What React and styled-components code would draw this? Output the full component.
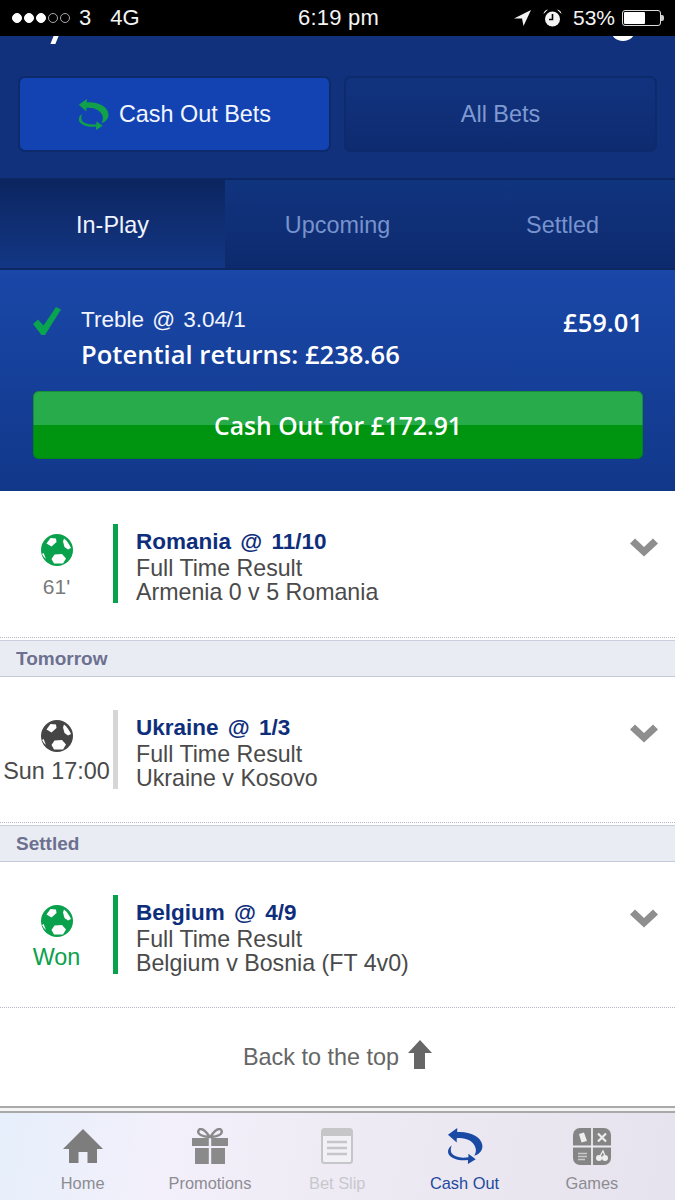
import React from 'react';
import styled, { createGlobalStyle } from 'styled-components';

const Global = createGlobalStyle`
  html, body { margin: 0; padding: 0; background: #fff; }
  body { font-family: "Liberation Sans", Arial, sans-serif; }
  * { box-sizing: border-box; }
`;

const Page = styled.div`width: 675px; height: 1200px; overflow: hidden; display: flex; flex-direction: column; position: relative;`;

const StatusBar = styled.div`
  height: 36px; background: #000; color: #f4f4f4; display: grid; grid-template-columns: 1fr auto 1fr; align-items: center;
  padding: 0 10px 0 12px; font-size: 21px; flex: none; position: relative; z-index: 2;
`;
const StatusLeft = styled.div`display: flex; align-items: center; gap: 5px; font-size: 22px;`;
const Carrier = styled.span`margin-left: 4px;`;
const Network = styled.span`margin-left: 14px;`;
const Dots = styled.div`display: flex; gap: 2px;`;
const Dot = styled.span`width: 10px; height: 10px; border-radius: 50%; border: 1px solid #bbb; background: ${p => p.$on ? '#fff' : 'transparent'}; border-color: ${p => p.$on ? '#fff' : '#aaa'};`;
const Clock = styled.div`font-size: 22px; font-weight: 500; letter-spacing: .2px; padding-left: 2px; padding-right: 2px;`;
const StatusRight = styled.div`display: flex; align-items: center; justify-content: flex-end; gap: 11px; padding-right: 4px;`;
const Percent = styled.span`margin-right: -4px;`;
const Battery = styled.div`width: 39px; height: 16px; border: 1px solid #ddd; border-radius: 3px; padding: 1px; position: relative;`;
const BatteryFill = styled.div`height: 100%; background: #fff; border-radius: 1px; width: 60%;`;
const BatteryNib = styled.span`position: absolute; right: -4px; top: 4px; width: 3px; height: 6px; background: #ccc; border-radius: 0 2px 2px 0;`;

const Header = styled.div`
  height: 144px; flex: none; background: #11317c; padding: 40px 18px 0; position: relative; border-bottom: 2px solid #0c2863;
`;
const ClippedTail = styled.span`position: absolute; left: 52px; top: 0; width: 5px; height: 8px; background: #fff; transform: skewX(-22deg);`;
const ClippedDot = styled.span`position: absolute; left: 610px; top: -10px; width: 26px; height: 15px; background: #fff; border-radius: 0 0 14px 14px;`;
const Toggles = styled.div`display: grid; grid-template-columns: 1fr 1fr; gap: 13px;`;
const Toggle = styled.div`
  height: 76px; border-radius: 7px; display: flex; align-items: center; justify-content: center; gap: 10px; font-size: 23.4px;
  border: 2px solid #0c2a6c;
  background: ${p => p.$active ? '#1343b3' : 'linear-gradient(#11337f, #0e2b70)'};
  color: ${p => p.$active ? '#f2f6ff' : '#7f9ad2'};
`;

const Tabs = styled.div`height: 90px; flex: none; display: grid; grid-template-columns: repeat(3, 225px); border-bottom: 2px solid #0c2863; background: linear-gradient(#11347f, #0d2a6e);`;
const Tab = styled.div`
  display: flex; align-items: center; justify-content: center; font-size: 23.4px; padding-top: 2px;
  color: ${p => p.$active ? '#f0f4ff' : '#7893cd'};
  background: ${p => p.$active ? 'linear-gradient(#0c2560, #133784)' : 'transparent'};
`;

const Summary = styled.div`height: 221px; flex: none; background: linear-gradient(#1a47a8, #123a8e 85%, #113789); padding: 37px 32px 0 33px; display: flex; flex-direction: column;`;
const SummaryTop = styled.div`display: flex; align-items: flex-start;`;
const SummaryText = styled.div`margin-left: 20px; flex: 1; color: #fff;`;
const Treble = styled.div`font-size: 22.5px; line-height: 26px; word-spacing: 2px; color: #f2f5ff;`;
const Returns = styled.div`font-family: "Open Sans", sans-serif; font-size: 25.6px; font-weight: 600; line-height: 30px; margin-top: 7px; white-space: nowrap;`;
const Stake = styled.div`font-family: "Open Sans", sans-serif; font-size: 25.5px; font-weight: 600; color: #fff; line-height: 30px;`;
const CashOutButton = styled.div`
  margin-top: 21px; height: 68px; border-radius: 6px; color: #fff; font-family: "Open Sans", sans-serif; font-size: 24.7px; font-weight: 600;
  display: flex; align-items: center; justify-content: center;
  background: linear-gradient(#28ab4a 0, #28ab4a 50%, #009510 50%, #009510 100%);
  box-shadow: inset 0 0 0 1px rgba(0,120,30,.5);
`;

const Row = styled.div`height: ${p => p.$h}px; flex: none; background: #fff; display: flex; align-items: flex-start; padding: 33px 17px 0 0; border-bottom: 1px dotted #b4b8c4;`;
const Status = styled.div`width: 113px; flex: none; display: flex; flex-direction: column; align-items: center; gap: ${p => p.$gap}px; padding-top: 10px;`;
const StatusLabel = styled.div`white-space: nowrap; font-size: ${p => p.$small ? 21 : 23.4}px; line-height: 26px; color: ${p => p.$color};`;
const Bar = styled.div`width: 5px; height: 79px; flex: none; background: ${p => p.$color};`;
const Details = styled.div`flex: 1; padding: 3px 0 0 18px; color: #4a4a4a; font-size: 23.2px; line-height: 23.5px;`;
const Title = styled.div`color: #0e2e7c; font-weight: 700; font-size: 22.5px; line-height: 30px; word-spacing: 3px;`;
const Chevron = styled.div`padding-top: 14px; display: flex;`;

const SectionHead = styled.div`
  height: 37px; flex: none; margin-top: 2px; background: #e9edf3; border-top: 1px solid #c9cfdc; border-bottom: 1px solid #c4cada;
  padding-left: 16px; display: flex; align-items: center; font-size: 19px; font-weight: 700; color: #6d7090;
`;
const BackTop = styled.div`height: 98px; flex: none; display: flex; align-items: center; justify-content: center; gap: 9px; font-size: 23.4px; color: #666;`;
const BackArrow = styled.svg`margin-bottom: 6px;`;
const Rule = styled.div`height: 7px; flex: none; border-top: 2px solid #a9a9a9; border-bottom: 2px solid #a9a9a9; background: #f4f4f4;`;

const TabBar = styled.div`flex: 1; display: grid; grid-template-columns: repeat(5, 127.3px); padding: 14px 0 0 19px; background: linear-gradient(100deg, #e6effb 0, #f3f0fb 25%, #ece9f3 60%, #e6e3ee 100%);`;
const NavItem = styled.div`display: flex; flex-direction: column; align-items: center; font-size: 16.4px; color: ${p => p.$color};`;
const NavIcon = styled.div`height: 38px; display: flex; align-items: center; justify-content: center;`;
const NavLabel = styled.div`margin-top: 8px; line-height: 20px; white-space: nowrap;`;

const SwapIcon = ({ size, color }) => (
  <svg width={size} height={size} viewBox="0 0 36 37">
    <path d="M10 0 L0.5 7 L9.5 15 L9.5 10.5 C18 9.5 27 13 29 21 C29.5 24 29 26 27.5 28.5 C33 27 36.5 23 35.8 17.5 C34.5 8 21 3 10 4.2 Z" fill={color} />
    <path d="M4.5 18 C1 20 -0.5 24 1.5 27.5 C4.5 32 13 34 21 32.8 L21 37 L29 32 L21.5 26.5 L21.5 30 C14 31.5 6 29.5 4 25.5 C3 23 3.3 20 4.5 18 Z" fill={color} />
  </svg>
);

const Ball = ({ color }) => (
  <svg width="32" height="32" viewBox="0 0 32 32">
    <circle cx="16" cy="16" r="16" fill={color} />
    <g fill="#fff">
      <path d="M5.5 9.5 L9.5 4 L15 4.5 L15.5 8 L10.5 12.5 Z" />
      <path d="M23 4.5 Q27 7.5 30 14 L27 15.5 L23.5 13 L22 7.5 Z" />
      <path d="M13.5 20.5 L21 20 L25 24.5 L22 29.5 L13 29.5 L10.5 25 Z" />
      <path d="M1 20 L2.6 19 L5 25 Q2.5 23 1 20 Z" />
    </g>
  </svg>
);

const Check = () => (
  <svg width="28" height="28" viewBox="0 0 28 28" style={{ flex: 'none' }}>
    <path d="M0 17 L5 12.5 L10.5 18.5 L23 0 L28 2.5 L12 28 L8.5 28 Z" fill="#0aa350" />
  </svg>
);

const ChevronDown = () => (
  <svg width="28" height="19" viewBox="0 0 28 19">
    <path d="M0 5.5 L5 0.5 L14 9 L23 0.5 L28 5.5 L14 18.5 Z" fill="#8e8e8e" />
  </svg>
);

const UpArrow = () => (
  <BackArrow width="24" height="29" viewBox="0 0 24 29">
    <path d="M12 0 L24 13 L17 13 L17 29 L6 29 L6 13 L0 13 Z" fill="#666" />
  </BackArrow>
);

const Home = () => (
  <svg width="40" height="34" viewBox="0 0 40 34">
    <path d="M20 0 L40 20 L34 20 L34 34 L24.5 34 L24.5 23 L15.5 23 L15.5 34 L6 34 L6 20 L0 20 Z" fill="#7d7d7d" />
  </svg>
);

const Gift = () => (
  <svg width="36" height="36" viewBox="0 0 36 36">
    <path d="M17.5 9 C13 1 8 -0.5 6.5 2.5 C5 6 10 9 17.5 9 Z M18.5 9 C23 1 28 -0.5 29.5 2.5 C31 6 26 9 18.5 9 Z" fill="none" stroke="#8a8a8a" strokeWidth="2.4" />
    <path d="M0 10 H16.8 V18 H0 Z M19.2 10 H36 V18 H19.2 Z M3 20 H16.8 V36 H3 Z M19.2 20 H33 V36 H19.2 Z" fill="#8a8a8a" />
  </svg>
);

const Slip = () => (
  <svg width="32" height="36" viewBox="0 0 32 36">
    <rect x="1" y="1" width="30" height="34" rx="2.5" fill="#f2f1f6" stroke="#c6c6c8" strokeWidth="2" />
    <rect x="1" y="1" width="30" height="7" fill="#c6c6c8" />
    <path d="M6 14 H26 M6 20 H26 M6 26 H26" stroke="#c6c6c8" strokeWidth="2.6" />
  </svg>
);

const Games = () => (
  <svg width="38" height="37" viewBox="0 0 38 37">
    <rect x="0" y="0" width="38" height="37" rx="7" fill="#858585" />
    <path d="M19 0 V37 M0 18.5 H38" stroke="#eeecf3" strokeWidth="1.8" />
    <path d="M6 6 L11 4.5 L14 13 L8.5 14.5 Z" fill="#eee" />
    <path d="M25 5.5 L33 13.5 M33 5.5 L25 13.5" stroke="#eee" strokeWidth="2.2" />
    <path d="M5 25.5 H14 M5 28.5 H14 M5 31.5 H12" stroke="#c9c9c9" strokeWidth="1.4" />
    <circle cx="26" cy="30" r="3" fill="#eee" /><circle cx="32" cy="30" r="3" fill="#eee" />
    <path d="M27 28 L30 23 L32 28" stroke="#eee" strokeWidth="1.3" fill="none" />
  </svg>
);

const LocationArrow = () => (
  <svg width="17" height="16" viewBox="0 0 17 16"><path d="M17 0 L0 8.5 L8 8.5 L9.5 16 Z" fill="#f2f2f2" /></svg>
);
const Alarm = () => (
  <svg width="19" height="18" viewBox="0 0 19 18" style={{ marginLeft: 1 }}>
    <circle cx="9.5" cy="10" r="7.5" fill="#f4f4f4" />
    <path d="M9.5 5 V10.5 H6" stroke="#000" strokeWidth="1.6" fill="none" />
    <path d="M0.5 5 Q1 1 5 0.5 Z M18.5 5 Q18 1 14 0.5 Z" fill="#f4f4f4" />
  </svg>
);

const bets = [
  { title: 'Romania @ 11/10', detail: 'Armenia 0 v 5 Romania', label: "61'", labelColor: '#7a7a7a', small: true, ball: '#0aa14c', bar: '#0aa14c', h: 147, gap: 8 },
  { section: 'Tomorrow', title: 'Ukraine @ 1/3', detail: 'Ukraine v Kosovo', label: 'Sun 17:00', labelColor: '#4a4a4a', ball: '#454545', bar: '#d6d6d6', h: 146, gap: 6 },
  { section: 'Settled', title: 'Belgium @ 4/9', detail: 'Belgium v Bosnia (FT 4v0)', label: 'Won', labelColor: '#0aa14c', ball: '#0aa14c', bar: '#0aa14c', h: 146, gap: 7 },
];

const nav = [
  { label: 'Home', icon: <Home />, color: '#8c8c92' },
  { label: 'Promotions', icon: <Gift />, color: '#8c8c92' },
  { label: 'Bet Slip', icon: <Slip />, color: '#c8c8cc' },
  { label: 'Cash Out', icon: <SwapIcon size={36} color="#1a4aa3" />, color: '#1f4a9c' },
  { label: 'Games', icon: <Games />, color: '#8c8c92' },
];

export default function App() {
  return (
    <Page>
      <Global />
      <StatusBar>
        <StatusLeft>
          <Dots>{[1, 1, 1, 0, 0].map((d, i) => <Dot key={i} $on={!!d} />)}</Dots>
          <Carrier>3</Carrier>
          <Network>4G</Network>
        </StatusLeft>
        <Clock>6:19 pm</Clock>
        <StatusRight>
          <LocationArrow />
          <Alarm />
          <Percent>53%</Percent>
          <Battery><BatteryFill /><BatteryNib /></Battery>
        </StatusRight>
      </StatusBar>
      <Header>
        <ClippedTail />
        <ClippedDot />
        <Toggles>
          <Toggle $active><SwapIcon size={31} color="#12a04a" />Cash Out Bets</Toggle>
          <Toggle>All Bets</Toggle>
        </Toggles>
      </Header>
      <Tabs>
        <Tab $active>In-Play</Tab>
        <Tab>Upcoming</Tab>
        <Tab>Settled</Tab>
      </Tabs>
      <Summary>
        <SummaryTop>
          <Check />
          <SummaryText>
            <Treble>Treble @ 3.04/1</Treble>
            <Returns>Potential returns: £238.66</Returns>
          </SummaryText>
          <Stake>£59.01</Stake>
        </SummaryTop>
        <CashOutButton>Cash Out for £172.91</CashOutButton>
      </Summary>
      {bets.map(b => (
        <React.Fragment key={b.title}>
          {b.section && <SectionHead>{b.section}</SectionHead>}
          <Row $h={b.h}>
            <Status $gap={b.gap}>
              <Ball color={b.ball} />
              <StatusLabel $color={b.labelColor} $small={b.small}>{b.label}</StatusLabel>
            </Status>
            <Bar $color={b.bar} />
            <Details>
              <Title>{b.title}</Title>
              <div>Full Time Result</div>
              <div>{b.detail}</div>
            </Details>
            <Chevron><ChevronDown /></Chevron>
          </Row>
        </React.Fragment>
      ))}
      <BackTop>Back to the top <UpArrow /></BackTop>
      <Rule />
      <TabBar>
        {nav.map(n => (
          <NavItem key={n.label} $color={n.color}>
            <NavIcon>{n.icon}</NavIcon>
            <NavLabel>{n.label}</NavLabel>
          </NavItem>
        ))}
      </TabBar>
    </Page>
  );
}
